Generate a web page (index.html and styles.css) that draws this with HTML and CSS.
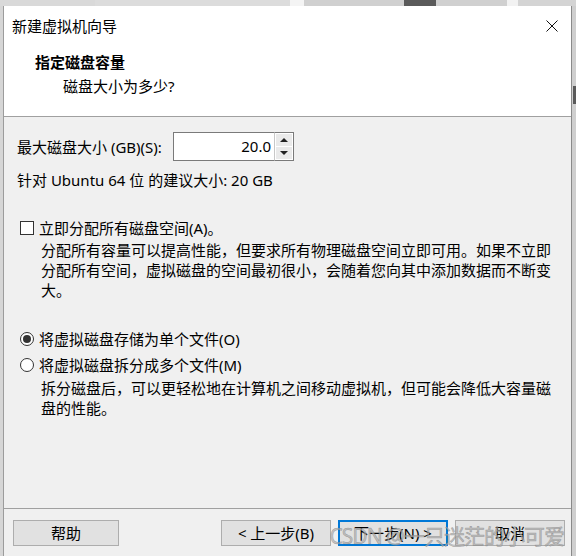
FILE: index.html
```html
<!DOCTYPE html>
<html lang="zh-CN">
<head>
<meta charset="utf-8">
<title>新建虚拟机向导</title>
<link rel="stylesheet" href="styles.css">
</head>
<body>
<div class="desk">
  <span class="seg seg-a"></span>
  <span class="seg seg-b"></span>
  <span class="seg seg-c"></span>
  <span class="seg seg-d"></span>
  <span class="seg seg-e"></span>
  <span class="seg seg-f"></span>
  <span class="seg seg-h"></span>
  <span class="seg seg-g"></span>
</div>
<div class="stage">
  <div class="window">
    <header class="header">
      <div class="titlebar">
        <span class="title">新建虚拟机向导</span>
        <svg class="close" width="12" height="12" viewBox="0 0 12 12"><path d="M0.5 0.5 L11.5 11.5 M11.5 0.5 L0.5 11.5" stroke="#111" stroke-width="1" fill="none"/></svg>
      </div>
      <div class="head-title">指定磁盘容量</div>
      <div class="head-sub">磁盘大小为多少?</div>
    </header>
    <main class="content">
      <div class="size-row">
        <span class="size-label">最大磁盘大小 (GB)(S):</span>
        <div class="spin">
          <div class="spin-input">20.0</div>
          <div class="spin-btns">
            <span class="spin-btn"><span class="tri-up"></span></span>
            <span class="spin-btn"><span class="tri-down"></span></span>
          </div>
        </div>
      </div>
      <div class="hint">针对 Ubuntu 64 位 的建议大小: 20 GB</div>
      <div class="check-row"><span class="checkbox"></span><span>立即分配所有磁盘空间(A)。</span></div>
      <p class="desc desc-alloc">分配所有容量可以提高性能，但要求所有物理磁盘空间立即可用。如果不立即<br>分配所有空间，虚拟磁盘的空间最初很小，会随着您向其中添加数据而不断变<br>大。</p>
      <div class="radio-row radio-first"><span class="radio radio-on"></span><span>将虚拟磁盘存储为单个文件(O)</span></div>
      <div class="radio-row radio-second"><span class="radio"></span><span>将虚拟磁盘拆分成多个文件(M)</span></div>
      <p class="desc desc-split">拆分磁盘后，可以更轻松地在计算机之间移动虚拟机，但可能会降低大容量磁<br>盘的性能。</p>
    </main>
    <footer class="footer">
      <button class="btn btn-help">帮助</button>
      <span class="spacer"></span>
      <button class="btn">&lt; 上一步(B)</button>
      <button class="btn btn-default">下一步(N) &gt;</button>
      <button class="btn">取消</button>
      <div class="watermark">CSDN @一只迷茫的小可爱</div>
    </footer>
  </div>
  <div class="behind"><span class="behind-mark"></span></div>
</div>
</body>
</html>
```

FILE: styles.css
```css
* { box-sizing: border-box; }

html, body {
  margin: 0;
  padding: 0;
}

body {
  width: 576px;
  height: 556px;
  overflow: hidden;
  background: #d6d6d6;
  font-family: "Noto Sans", "Noto Sans CJK SC", sans-serif;
  font-size: 15px;
  line-height: 20px;
  color: #000;
}

.desk {
  display: flex;
  height: 6px;
}

.seg { display: block; height: 6px; }
.seg-a { width: 95px; background: #d9d9d9; }
.seg-b { width: 195px; background: #dcdcdc; }
.seg-c { width: 14px; background: #f4f4f4; }
.seg-d { width: 100px; background: #d0d0d0; }
.seg-e { width: 32px; background: #5a5a5a; }
.seg-f { width: 71px; background: #d0d0d0; }
.seg-h { width: 11px; background: #f2f2f2; }
.seg-g { flex: 1; background: #d4d4d4; }

.stage {
  display: flex;
  padding-left: 3px;
  height: 550px;
}

.behind {
  flex: 1;
  background: #cfcfcf;
  border-left: 1px solid #8a8a8a;
  position: relative;
}

.behind-mark {
  position: absolute;
  left: 1px;
  top: 80px;
  width: 3px;
  height: 18px;
  background: #5a5a5a;
}

.window {
  position: relative;
  width: 568px;
  height: 550px;
  background: #f0f0f0;
  border-left: 1px solid #9c9c9c;
  display: flex;
  flex-direction: column;
}

.header {
  background: #fff;
  height: 111px;
  border-bottom: 1px solid #a0a0a0;
  padding-bottom: 20px;
}

.titlebar {
  height: 40px;
  display: flex;
  align-items: center;
  justify-content: space-between;
  padding-left: 8px;
  padding-right: 13px;
}

.title { line-height: 20px; }

.close { display: block; }

.head-title {
  margin-top: 6px;
  padding-left: 31px;
  font-weight: bold;
}

.head-sub {
  margin-top: 4px;
  padding-left: 59px;
}

.content {
  height: 391px;
  padding-left: 13px;
  padding-top: 15px;
}

.size-row {
  display: flex;
  align-items: center;
  height: 29px;
}

.size-label { width: 156px; }

.spin {
  display: flex;
  height: 29px;
}

.spin-input {
  width: 101px;
  height: 29px;
  background: #fff;
  border: 1px solid #7a7a7a;
  border-right: none;
  text-align: right;
  padding-right: 3px;
  line-height: 26px;
}

.spin-btns {
  width: 20px;
  height: 29px;
  border: 1px solid #7a7a7a;
  border-left: 1px solid #c8c8c8;
  display: flex;
  flex-direction: column;
  background: #fff;
  padding: 1px;
  gap: 1px;
}

.spin-btn {
  flex: 1;
  background: #eaeaea;
  display: flex;
  align-items: center;
  justify-content: center;
}

.tri-up {
  width: 0;
  height: 0;
  border-left: 4px solid transparent;
  border-right: 4px solid transparent;
  border-bottom: 4px solid #222;
}

.tri-down {
  width: 0;
  height: 0;
  border-left: 4px solid transparent;
  border-right: 4px solid transparent;
  border-top: 4px solid #222;
}

.hint {
  margin-top: 9px;
}

.check-row {
  margin-top: 28px;
  display: flex;
  align-items: center;
  height: 20px;
}

.checkbox {
  width: 14px;
  height: 14px;
  margin-left: 3px;
  margin-right: 5px;
  border: 1px solid #333;
  background: #fff;
}

.desc {
  margin: 0;
  padding-left: 24px;
  white-space: nowrap;
}

.desc-alloc { margin-top: 2px; }

.radio-row {
  display: flex;
  align-items: center;
  height: 20px;
}

.radio-first { margin-top: 29px; }
.radio-second { margin-top: 6px; }

.radio {
  width: 14px;
  height: 14px;
  margin-left: 3px;
  margin-right: 5px;
  border: 1px solid #333;
  border-radius: 50%;
  background: #fff;
  display: flex;
  align-items: center;
  justify-content: center;
}

.radio-on::after {
  content: "";
  width: 8px;
  height: 8px;
  border-radius: 50%;
  background: #333;
}

.desc-split { margin-top: 3px; }

.footer {
  flex: 1;
  border-top: 1px solid #a0a0a0;
  display: flex;
  align-items: flex-start;
  padding: 11px 6px 0 9px;
  gap: 7px;
  position: relative;
}

.spacer { flex: 1; }

.btn {
  width: 110px;
  height: 26px;
  background: #e1e1e1;
  border: 1px solid #adadad;
  font-family: inherit;
  font-size: 15px;
  line-height: 20px;
  color: #000;
  padding: 0;
  margin: 0;
}

.btn-help { width: 106px; }

.btn-default {
  border: 2px solid #0078d7;
}

.watermark {
  position: absolute;
  right: 7px;
  top: 13px;
  font-family: "Noto Sans", "Noto Sans CJK SC", sans-serif;
  font-size: 21px;
  letter-spacing: -1px;
  line-height: 28px;
  color: rgba(175, 175, 175, 0.7);
  -webkit-text-stroke: 0.5px rgba(100, 100, 100, 0.5);
  pointer-events: none;
  white-space: nowrap;
}
```
